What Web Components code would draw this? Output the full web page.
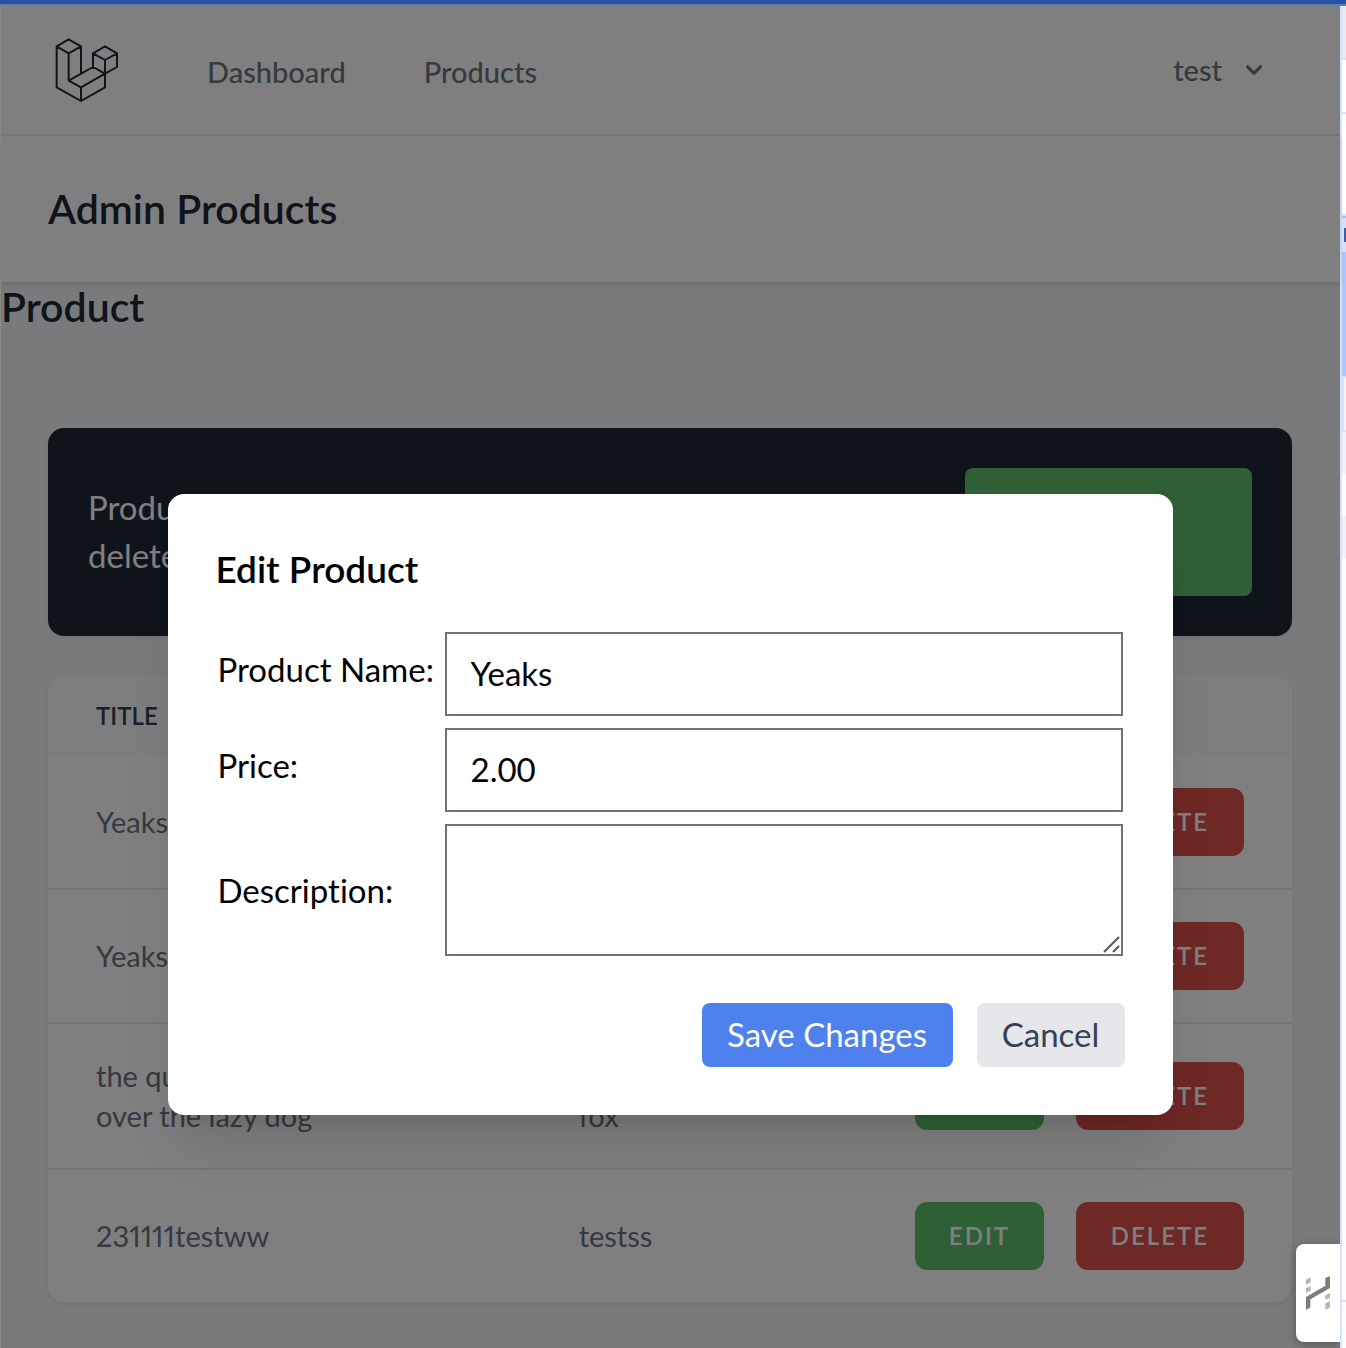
<!DOCTYPE html>
<html lang="en">
<head>
<meta charset="utf-8">
<title>Admin Products</title>
<style>
  html, body { margin: 0; min-height: 100vh; }
  body {
    --sans: Lato, "Open Sans", "Liberation Sans", sans-serif;
    font-family: var(--sans);
    background: #fff;
    color: #000;
  }
</style>
</head>
<body>
<app-window>
  <app-nav></app-nav>
  <page-header>Admin Products</page-header>
  <page-title>Product</page-title>
  <page-content>
    <info-banner>Products<br>deleted<ui-button slot="action" variant="add">Add</ui-button></info-banner>
    <product-table></product-table>
  </page-content>
  <edit-dialog slot="overlay"></edit-dialog>
  <help-tab slot="overlay"></help-tab>
  <side-panel slot="side"></side-panel>
</app-window>

<script>
const define = (name, html, setup) => {
  const template = document.createElement('template');
  template.innerHTML = `<style>:host,*{box-sizing:border-box}</style>${html}`;
  customElements.define(name, class extends HTMLElement {
    constructor() {
      super();
      this.attachShadow({ mode: 'open' }).append(template.content.cloneNode(true));
      if (setup) setup(this.shadowRoot);
    }
  });
};

define('ui-button', `
<style>
  :host { display: block; }
  button { font: 600 24px/36px var(--sans); letter-spacing: 2px; text-transform: uppercase; color: #fff;
    width: 100%; height: 100%; padding: 16px 32px; border: 0; border-radius: 12px; background: #5ec06a; cursor: pointer; }
  :host([variant=delete]) button { background: #dc504c; }
  :host([variant=add]) button { border-radius: 8px; }
  :host([variant=save]) button, :host([variant=cancel]) button {
    font: 400 33px/48px var(--sans); letter-spacing: normal; text-transform: none; padding: 7px 24px 9px; border-radius: 8px; }
  :host([variant=save]) button { background: #4f81ee; }
  :host([variant=cancel]) button { background: #e5e7eb; color: #374151; }
</style>
<button type="button"><slot></slot></button>`);

define('app-window', `
<style>
  :host { display: flex; flex-direction: column; min-height: 100vh; }
  .frame { height: 6px; background: #28529b; border-bottom: 2px solid #5580bb; }
  .body { flex: 1; display: flex; }
  main { position: relative; flex: 1; min-width: 0; background: #f3f4f6; padding-left: 1px; padding-bottom: 46px; }
  .shade { position: absolute; inset: 0; background: rgba(0,0,0,.5); border-left: 1px solid rgba(255,255,255,.12); }
</style>
<div class="frame"></div>
<div class="body">
  <main><slot></slot><div class="shade"></div><slot name="overlay"></slot></main>
  <slot name="side"></slot>
</div>`);

define('app-nav', `
<style>
  :host { display: block; background: #fff; border-bottom: 2px solid #f0f0f2; }
  nav { display: flex; align-items: center; height: 128px; padding: 0 48px 0 54px; font: 500 29px/40px var(--sans); }
  a { color: #6b7280; text-decoration: none; }
  .logo { display: block; margin-right: 88px; }
  svg { display: block; }
  .links { display: flex; gap: 78px; flex: 1; padding-top: 4px; }
  button { display: flex; align-items: center; gap: 16px; padding: 0 22px; border: 0; background: none; font: inherit; color: #6b7280; }
</style>
<nav>
  <a class="logo" href="#" aria-label="Home">
    <svg width="64" height="64" viewBox="45 38 192 192" fill="none" stroke="#1f2937" stroke-width="6" stroke-linejoin="round">
      <path d="M50 63L86 42L123 63L86 84ZM50 63V186L123 227L195 186V145M86 84V166M123 63V146M86 166L123 186V227M86 166L159 125L195 145L123 186M159 84L195 63L231 84L195 104ZM159 84V125M231 84V125L195 145V104"/>
    </svg>
  </a>
  <div class="links"><a href="#">Dashboard</a><a href="#">Products</a></div>
  <button type="button">test
    <svg width="32" height="32" viewBox="0 0 20 20" fill="currentColor"><path fill-rule="evenodd" d="M5.293 7.293a1 1 0 011.414 0L10 10.586l3.293-3.293a1 1 0 111.414 1.414l-4 4a1 1 0 01-1.414 0l-4-4a1 1 0 010-1.414z"/></svg>
  </button>
</nav>`);

define('page-header', `
<style>
  :host { display: block; position: relative; background: #fff; padding: 48px 47px; box-shadow: 0 2px 6px rgba(0,0,0,.1), 0 2px 4px rgba(0,0,0,.06); }
  h1 { margin: 0; font: 600 41px/50px var(--sans); color: #1f2937; }
</style>
<h1><slot></slot></h1>`);

define('page-title', `
<style>
  :host { display: block; }
  h2 { margin: 0; font: 600 41px/50px var(--sans); color: #1f2937; }
</style>
<h2><slot></slot></h2>`);

define('page-content', `
<style>
  :host { display: flex; flex-direction: column; gap: 40px; padding: 96px 48px 0 47px; }
</style>
<slot></slot>`);

define('info-banner', `
<style>
  :host { display: flex; justify-content: space-between; align-items: center; padding: 40px; border-radius: 16px;
    background: #1f2937; box-shadow: 0 2px 4px rgba(0,0,0,.06); }
  p { margin: 0; padding-bottom: 2px; font: 400 33px/48px var(--sans); color: #fff; }
  ::slotted(ui-button) { flex: 0 0 287px; height: 128px; }
</style>
<p><slot></slot></p><slot name="action"></slot>`);

define('product-table', `
<style>
  :host { display: block; border-radius: 16px; overflow: hidden; background: #fff; box-shadow: 0 2px 4px rgba(0,0,0,.06); }
  table { width: 100%; border-collapse: collapse; table-layout: fixed; font: 400 29px/40px var(--sans); color: #6b7280; }
  th, td { text-align: left; padding: 32px 48px; }
  td { font-variant-numeric: proportional-nums; }
  th { padding: 24px 48px; font: 600 24px/32px var(--sans); color: #374151; background: #f7fcf9; text-transform: uppercase; }
  th:first-child { width: 38.8%; }
  th:last-child { width: 34.2%; }
  tr + tr td { border-top: 2px solid #e5e7eb; }
  .actions { display: flex; justify-content: flex-end; align-items: center; gap: 32px; }
  ui-button { width: 129px; }
  ui-button[variant=delete] { width: 168px; }
</style>
<table>
  <thead><tr><th>Title</th><th>Description</th><th></th></tr></thead>
  <tbody></tbody>
</table>`, root => {
  const rows = [['Yeaks', ''], ['Yeaks', ''], ['the quick brown fox jumps<br>over the lazy dog', 'the quick<br>fox'], ['231111testww', 'testss']];
  root.querySelector('tbody').innerHTML = rows.map(([title, text]) => `<tr><td>${title}</td><td>${text}</td><td><div class="actions"><ui-button>Edit</ui-button><ui-button variant="delete">Delete</ui-button></div></td></tr>`).join('');
});

define('edit-dialog', `
<style>
  :host { position: absolute; inset: 0; display: flex; justify-content: center; align-items: flex-start; padding-top: 488px; }
  section { width: 75%; padding: 48px; border-radius: 16px; background: #fff; box-shadow: 0 40px 50px -10px rgba(0,0,0,.1), 0 16px 20px -12px rgba(0,0,0,.1); }
  h2 { margin: 0 0 36px; font: 600 37px/54px var(--sans); }
  .fields { display: grid; grid-template-columns: 215px 1fr; gap: 12px; padding: 0 2px; align-items: center; font: 400 33px/48px var(--sans); }
  label { white-space: nowrap; font-variant-ligatures: none; }
  .line { padding-bottom: 10px; }
  input, textarea { display: block; width: 100%; height: 84px; margin: 0; padding: 15px 24px 17px; border: 2px solid #6b7280; border-radius: 0; background: #fff; color: #000; font: inherit; }
  textarea { height: 132px; resize: none; }
  .area { display: grid; align-items: end; justify-items: end; }
  .area > * { grid-area: 1 / 1; }
  .area svg { margin: 2px; pointer-events: none; z-index: 1; }
  .buttons { display: flex; justify-content: flex-end; gap: 24px; margin-top: 47px; }
  ui-button[variant=save] { width: 251px; }
  ui-button[variant=cancel] { width: 148px; }
</style>
<section role="dialog" aria-labelledby="heading">
  <h2 id="heading">Edit Product</h2>
  <form class="fields">
    <label class="line" for="name">Product Name:</label><input id="name" type="text" value="Yeaks">
    <label class="line" for="price">Price:</label><input id="price" type="text" value="2.00">
    <label for="description">Description:</label>
    <div class="area"><textarea id="description"></textarea>
      <svg width="18" height="18" fill="none" stroke="#555" stroke-width="2"><path d="M1 16L16 1M10 16L16 10"/></svg></div>
  </form>
  <div class="buttons"><ui-button variant="save">Save Changes</ui-button><ui-button variant="cancel">Cancel</ui-button></div>
</section>`);

define('help-tab', `
<style>
  :host { position: absolute; right: 0; bottom: 6px; overflow: hidden; padding: 12px 0 12px 12px; margin-bottom: -12px; }
  button { display: flex; align-items: center; justify-content: center; width: 44px; height: 98px; padding: 0; border: 0;
    border-radius: 8px 0 0 8px; background: #fff; box-shadow: 0 2px 10px rgba(0,0,0,.3); }
</style>
<button type="button" aria-label="Open helper">
  <svg width="24" height="34" viewBox="0 0 72 102">
    <path fill="#b5b5b5" d="M0 11L14 4V19L0 26ZM0 37L14 30V44L0 50ZM58 58L72 51V65L58 71ZM58 82L72 75V94L58 102Z"/>
    <path fill="#7d7d7d" d="M58 6L72 0V36L13 70V94L0 102V63L58 29Z"/>
  </svg>
</button>`);

define('side-panel', `
<style>
  :host { display: flex; flex-direction: column; flex: 0 0 6px; border-left: 2px solid #d7e3fb; background: #fdfbff; }
  div { flex: none; height: 54px; border-bottom: 2px solid #d7e3fb; background: #fff; }
  .bar { background: #e8eaf3; }
  .tall { height: 102px; }
  .tab { height: 36px; border-top: 2px solid #a9c3fa; border-bottom: 0; background: #d7e3fc; padding: 10px 0 0 2px; }
  .tab i { display: block; height: 14px; background: #445f9f; }
  .picked { height: 126px; background: #aec6fb; }
  .inset { border-left: 2px solid #d7e3fb; background: #f3f3f9; }
  .stripe { height: 42px; border: 0; background: #f1f1f9; }
  .plain { height: 42px; border: 0; background: #fdfbff; }
  .rest { flex: 1; height: auto; background: #fdfbff; }
  .foot { height: 46px; border: 0; background: #fdfbff; }
</style>
<div class="bar"></div><div></div><div class="tall"></div>
<div class="tab"><i></i></div><div class="picked"></div><div class="inset"></div>
<div class="stripe"></div><div class="plain"></div><div class="stripe"></div>
<div class="rest"></div><div class="foot"></div>`);
</script>
</body>
</html>
